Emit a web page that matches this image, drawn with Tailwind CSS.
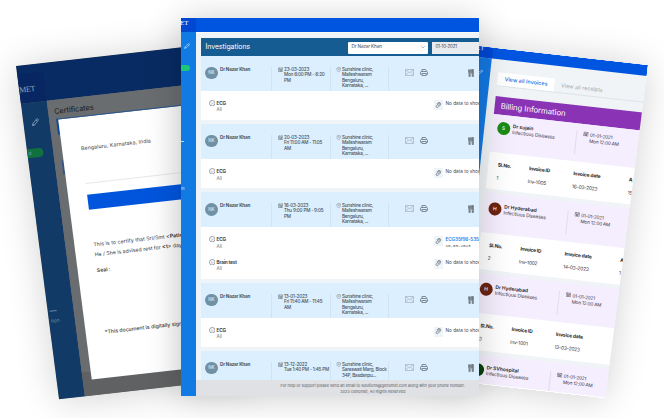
<!DOCTYPE html>
<html lang="en">
<head>
<meta charset="utf-8">
<title>Genomet</title>
<script src="https://cdn.jsdelivr.net/npm/@tailwindcss/browser@4"></script>
</head>
<body class="relative h-[418px] w-[664px] overflow-hidden bg-white font-['Inter',sans-serif] text-[#3c4650]">
<svg class="hidden">
  <symbol id="cal" viewBox="0 0 16 16"><path d="M1.500 3h13v11.500h-13zM1.500 6.500h13M4.500 1v3M11.500 1v3M4 9h8M4 12h8M6 7v7M10 7v7" fill="none" stroke="currentColor" stroke-width="1.100"/></symbol>
  <symbol id="pin" viewBox="0 0 16 16"><path d="M8 15.200C5 11.500 2.500 9 2.500 6a5.500 5.500 0 0 1 11 0c0 3-2.500 5.500-5.500 9.200z" fill="none" stroke="currentColor" stroke-width="1.500"/><circle cx="8" cy="6" r="2" fill="none" stroke="currentColor" stroke-width="1.300"/></symbol>
  <symbol id="mail" viewBox="0 0 18 14"><path d="M1 1h16v12H1zM1 1.500l8 6 8-6M1 12.500l5.500-6M17 12.500l-5.500-6" fill="none" stroke="currentColor" stroke-width="1.200"/></symbol>
  <symbol id="print" viewBox="0 0 16 14"><path d="M4 5V1h7l1.500 1.500V5M3.500 10.500H1V7a2 2 0 0 1 2-2h10a2 2 0 0 1 2 2v3.500h-2.500M4 9h8.500v4H4z" fill="none" stroke="currentColor" stroke-width="1.600"/></symbol>
  <symbol id="tools" viewBox="0 0 12 16"><path d="M1 1v6l.800 1V15h2.700V8l1-1V1M3.300 1v6M7 1h4v14H8V8.500H7zM9 1v7" fill="#8b959d" stroke="#525c64" stroke-width="1"/></symbol>
  <symbol id="clip" viewBox="0 0 16 16"><path d="M6 10.500l5-5a1.300 1.300 0 0 0-1.900-1.900l-5.500 5.500a2.800 2.800 0 0 0 4 4l5.800-5.800a4 4 0 0 0-5.600-5.600L4.500 5" fill="none" stroke="currentColor" stroke-width="1.700"/></symbol>
  <symbol id="pen" viewBox="0 0 16 16"><path d="M1.500 14.500l1-4 8.500-8.500a1.800 1.800 0 0 1 3 3l-8.500 8.500zM9.500 3.500l3 3M2.500 10.500l3 3" fill="none" stroke="currentColor" stroke-width="1.500"/></symbol>
  <symbol id="face" viewBox="0 0 16 16"><circle cx="8" cy="8" r="6.800" fill="none" stroke="currentColor" stroke-width="1.600"/><path d="M5 9.500h6M5.500 6h1M9.500 6h1" stroke="currentColor" stroke-width="1.200"/></symbol>
</svg>

<!-- certificates window -->
<section class="absolute left-[16px] top-[65.500px] flex h-[336px] w-[200px] origin-top-left flex-col overflow-hidden bg-[#6a6d70] shadow-[0_2px_36px_rgba(0,0,0,0.18)] [transform:matrix(.9937,-.112,.128,.992,0,0)]">
  <header class="h-[38px] shrink-0 bg-[#082b63] pt-[9px]">
    <div class="flex h-[29px] w-[26px] items-center bg-[#072662] pb-px pt-[4px] font-['Liberation_Serif',serif] text-[8px] tracking-[-.3px] text-[#93a0b8]"><span>MET</span></div>
  </header>
  <div class="flex flex-1">
    <aside class="flex w-[26px] shrink-0 flex-col bg-[#113b66] text-[#8fa3ba]">
      <svg class="ml-[8px] mt-[16px] size-[8px]"><use href="#pen"/></svg>
      <div class="mt-[22px] flex h-[9px] w-[16px] items-center rounded-r-[4px] bg-[#12703f] pl-px text-[5px] leading-none">d</div>
      <div class="mt-[154px] h-px w-[7px] bg-[#6f89a5] ml-[2px]"></div>
      <div class="mt-[6px] pl-[2px] text-[5px] leading-[6px] text-[#6f89a5]">tion</div>
    </aside>
    <main class="flex-1 bg-[linear-gradient(#6a6d70_274px,#5f6163_274px)]">
      <h1 class="h-[19px] pl-[6px] pt-[7px] text-[7.500px] leading-[10px] tracking-[-.1px] text-[#161a1e]">Certificates</h1>
      <div class="flex">
        <div class="flex w-[9px] flex-col items-end">
          <i class="h-[16px] w-[2px] bg-[#0c4a9c]"></i><i class="mt-[26px] h-[14px] w-[2px] bg-[#35558c]"></i>
        </div>
        <article class="h-[262.500px] flex-1 border-t border-[#29578f] bg-[linear-gradient(96deg,#fff_50%,#eceded_78%)] pl-[19px] text-[5.200px] leading-[10px] whitespace-nowrap text-[#3a3a3a]">
          <p class="mt-[25.500px] tracking-[.1px]">Bengaluru, Karnataka, India</p>
          <div class="mt-[30px] h-px bg-[#e6e6e6]"></div>
          <div class="mt-[11px] h-[15.500px] bg-[#0055dc]"></div>
          <p class="mt-[29.500px] tracking-[.06px]">This is to certify that Sri/Smt <b>&lt;Patient&gt;</b></p>
          <p>He / She is advised rest for <b>&lt;1&gt;</b> days</p>
          <p class="mt-[6px] font-semibold">Seal :</p>
          <p class="mt-[52px] font-medium">*This document is digitally signed</p>
        </article>
      </div>
    </main>
  </div>
</section>

<!-- billing window -->
<div class="absolute left-[458px] top-[65.300px] h-[336px] w-[190px] origin-top-right shadow-[0_2px_36px_rgba(0,0,0,0.18)] [transform:matrix(.9937,.112,-.128,.992,0,0)]"></div>
<section class="absolute left-[448.300px] top-[65.300px] flex h-[336px] w-[200px] origin-top-right flex-col overflow-hidden bg-[#f0f4f7] [clip-path:polygon(0_0,100%_0,193.500px_100%,0_100%)] [transform:matrix(.9937,.112,-.108,.992,0,0)]">
  <header class="flex h-[11px] shrink-0 bg-[#0055e0]"><div class="w-[43.500px] bg-[#0047d2] pl-[27px] font-['Liberation_Serif',serif] text-[7px] leading-[5px] text-white">ET</div></header>
  <div class="flex flex-1">
    <aside class="w-[43.500px] shrink-0 bg-[#1478e2] text-[#b8dcff]">
      <svg class="ml-[31px] mt-[12px] size-[6px]"><use href="#pen"/></svg>
      <div class="mt-[16px] h-[6px] w-[35px] rounded-full bg-[#22c55e]"></div>
    </aside>
    <main class="flex min-w-0 flex-1 flex-col pl-[8.500px] pt-[13px]">
      <nav class="flex h-[14px] shrink-0 border-b border-[#dfe4e8] text-[5.400px] leading-[13.500px] whitespace-nowrap">
        <span class="w-[57px] bg-white pl-[7px] font-medium tracking-[.02px] text-[#1668dc]">View all Invoices</span>
        <span class="pl-[7px] text-[#a0a5aa]">View all receipts</span>
      </nav>
      <h2 class="mt-[9.500px] h-[18.500px] shrink-0 bg-[#8a33b5] pl-[6px] text-[7.800px] leading-[18.500px] tracking-[-.05px] whitespace-nowrap text-white">Billing Information</h2>
      <div id="bills"></div>
    </main>
  </div>
</section>

<!-- investigations window -->
<div class="absolute left-[181px] top-[18px] h-[378px] w-[297.500px] shadow-[0_2px_34px_rgba(0,0,0,0.2)]">
<section class="flex h-full w-full flex-col overflow-hidden bg-[#eef4f8]">
  <header class="flex h-[14px] shrink-0 bg-[#0055e0]"><div class="w-[15px] bg-[#0047d2] font-['Liberation_Serif',serif] text-[7px] leading-[10px] text-white"><span class="-ml-px">ET</span></div></header>
  <div class="flex min-h-0 flex-1">
    <aside class="w-[15px] shrink-0 bg-[#117ae3] text-[#d5eaff]">
      <svg class="ml-[3px] mt-[11px] size-[6px]"><use href="#pen"/></svg>
      <div class="mt-[16px] h-[6px] w-[8.500px] rounded-r-full bg-[#1cc77a]"></div>
      <div class="mt-[70px] h-px w-[3px] bg-[#b8dcff]"></div>
      <div class="mt-[44px] w-[5px] text-[4px] leading-[5px]">m</div>
    </aside>
    <main class="flex min-w-0 flex-1 flex-col border-t border-[#f8fafc]">
      <div class="flex min-h-0 flex-1 flex-col pl-[5px] pt-[5px]">
        <div class="flex h-[18.300px] shrink-0 items-center bg-[#155c92] pl-[4.500px] pt-[1px]">
          <h2 class="w-[142.500px] shrink-0 text-[6.900px] leading-none tracking-[-.03px] text-white">Investigations</h2>
          <div class="flex h-[12px] w-[80px] shrink-0 items-center justify-between rounded-[1px] bg-white px-[3.500px] text-[4.600px]"><span class="tracking-[-.1px]">Dr Nazar Khan</span>
            <svg viewBox="0 0 8 5" class="h-[2.500px] w-[4px]"><path d="M.5.5 4 4 7.500.5" fill="none" stroke="#777" stroke-width="1"/></svg></div>
          <div class="ml-[4px] flex h-[12px] w-[50px] shrink-0 items-center bg-[#e9ecef] pl-[3.500px] text-[4.500px] tracking-[-.22px] whitespace-nowrap">01-10-2021</div>
        </div>
        <div id="rows" class="min-h-0 flex-1 overflow-hidden"></div>
      </div>
      <footer class="h-[16px] shrink-0 bg-[#dfe1e4] pl-[71px] pt-[3px] text-center text-[3.900px] leading-[6.400px] whitespace-nowrap text-[#596067]">
        <p>For help or support please send an email to solutions@genomet.com along with your phone number.</p>
        <p>2023 Genomet, All Rights Reserved</p>
      </footer>
    </main>
  </div>
</section>
</div>

<script>
const clinic = ['Sunshine clinic,', 'Malleshwaram', 'Bengaluru,', 'Karnataka, ...'];
const visits = [
  {d:['23-03-2023','Mon 6:00 PM - 6:20','PM'], a:clinic, t:[['ECG']]},
  {d:['20-03-2023','Fri 11:00 AM - 11:05','AM'], a:clinic, t:[['ECG']]},
  {d:['16-03-2023','Thu 9:00 PM - 9:05','PM'], a:clinic, t:[['ECG','ECG35f96-5354'],['Brain test']]},
  {d:['13-01-2023','Fri 11:40 AM - 11:45','AM'], a:clinic, t:[['ECG']]},
  {d:['13-12-2022','Tue 1:40 PM - 1:45 PM'], a:['Sunshine clinic,','Saraswati Marg, Block','34P, Basdanpu...'], t:[]}
];
const lines = l => l.map(s => `<p>${s}</p>`).join('');
document.getElementById('rows').innerHTML = visits.map(v => `
<div class="mb-[4.500px] whitespace-nowrap">
  <div class="flex h-[34.600px] bg-[#dbeffe] pt-[10.500px] text-[4.600px] leading-[5.500px] font-medium tracking-[-.2px] text-[#46525c]">
    <div class="flex w-[70.500px] shrink-0 border-r border-[#cfe3f2] pl-[4px]"><i class="flex size-[12.600px] items-center justify-center rounded-full bg-[#7090a4] text-[4.600px] not-italic text-[#d8e5ee]">NK</i><b class="ml-[2.500px] font-bold tracking-[-.18px]">Dr Nazar Khan</b></div>
    <div class="flex w-[59px] shrink-0 border-r border-[#cfe3f2] pl-[6px]"><svg class="mr-[1px] size-[5.500px] shrink-0"><use href="#cal"/></svg><div>${lines(v.d)}</div></div>
    <div class="flex w-[58.500px] shrink-0 border-r border-[#cfe3f2] pl-[5px]"><svg class="mr-[1px] size-[5.500px] shrink-0 text-[#7c8891]"><use href="#pin"/></svg><div>${lines(v.a)}</div></div>
    <div class="flex pt-[2px]"><svg class="ml-[16px] h-[7px] w-[9px] text-[#9aa7b0]"><use href="#mail"/></svg><svg class="ml-[5.500px] h-[7px] w-[8px] text-[#65727c]"><use href="#print"/></svg><svg class="ml-[40.500px] h-[8px] w-[6px]"><use href="#tools"/></svg></div>
  </div>
  ${v.t.length ? `<div class="bg-white pb-[3px] pt-[3.500px]">${v.t.map(t => `
  <div class="flex h-[22.500px] pt-[5.500px] text-[4.700px] leading-[6.600px]">
    <svg class="ml-[7.500px] mr-[1.500px] size-[6.500px] shrink-0 text-[#66727f]"><use href="#face"/></svg>
    <div class="w-[217px] shrink-0"><p class="font-bold tracking-[-.15px]">${t[0]}</p><p class="text-[#707a84]">All</p></div>
    <span class="flex h-[10px] w-[9.500px] shrink-0 items-center justify-center bg-[#eff4f8] text-[#5c6670]"><svg class="size-[6.500px]"><use href="#clip"/></svg></span>
    <div class="pl-[2.500px]">${t[1] ? `<p class="font-semibold tracking-[-.1px] text-[#1d84ee]">${t[1]}</p><p class="font-['Liberation_Mono',monospace] text-[4.200px]">16-03-2023</p>` : '<p>No data to show</p>'}</div>
  </div>`).join('')}</div>` : ''}
</div>`).join('');

const bills = [
  ['S','bg-[#1c8c14]','Dr sujain','Mon 12:00 AM','h-[38px]','pt-[6.500px]',['1','Inv-1005','16-03-2023','15']],
  ['H','bg-[#6b2412]','Dr Hyderabad','Mon 12:00 AM','h-[40.500px]','pt-[9px]',['2','Inv-1002','14-03-2023','1']],
  ['H','bg-[#6b2412]','Dr Hyderabad','Mon 12:00 AM','h-[40.500px]','pt-[9px]',['3','Inv-1001','13-03-2023','']],
  ['S','bg-[#083f0c]','Dr SVhospital','Mon 12:00 AM','h-[40.500px]','pt-[9px]',null]
];
document.getElementById('bills').innerHTML = bills.map((b, n) => `
<div class="text-[4.900px] leading-[6.200px] whitespace-nowrap text-[#3d3844]">
  <div class="flex ${b[4]} ${b[5]} bg-[#f5eefe]">
    <i class="ml-[4.800px] flex size-[13px] shrink-0 items-center justify-center rounded-full ${b[1]} text-[5px] not-italic font-medium text-white">${b[0]}</i>
    <div class="ml-[2.500px] w-[64px] shrink-0 pt-[.3px]"><p class="font-semibold text-[#222]">${b[2]}</p><p class="tracking-[-.12px]">Infectious Diseases</p></div>
    <div class="flex h-[24px] border-l border-[#e4daee] pl-[6px] text-[4.700px] tracking-[-.18px]"><svg class="mr-[1px] size-[5.500px] shrink-0"><use href="#cal"/></svg><div><p>01-01-2021</p><p>${b[3]}</p></div></div>
  </div>
  ${b[6] ? `<div class="grid h-[36.500px] grid-cols-[31.500px_44.500px_56px_auto] content-start gap-y-[6.500px] bg-white pl-[9.500px] pt-[9px]">
    <b class="tracking-[-.2px] text-[#222]">Sl.No.</b><b class="tracking-[-.25px] text-[#222]">Invoice ID</b><b class="tracking-[-.15px] text-[#222]">Invoice date</b><b class="text-[#222]">${n < 2 ? 'A' : ''}</b>
    ${b[6].map(c => `<span class="tracking-[-.2px]">${c}</span>`).join('')}
  </div>
  <div class="h-[4px]"></div>` : ''}
</div>`).join('');
</script>
</body>
</html>
